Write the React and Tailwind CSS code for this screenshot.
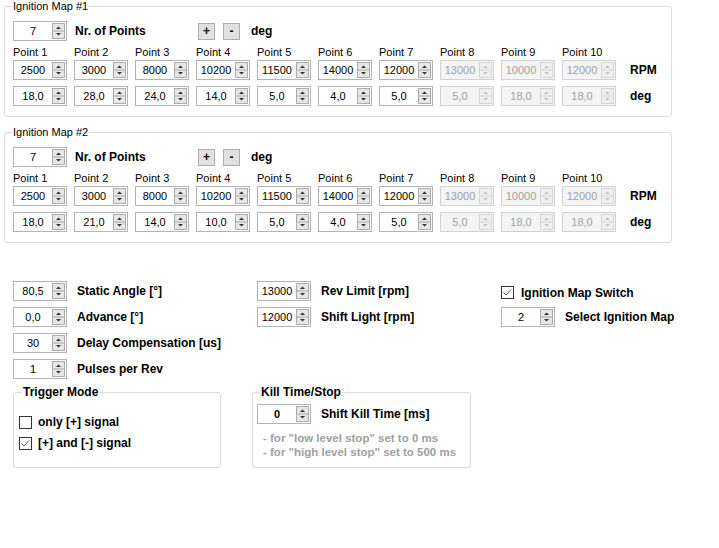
import React from "react"

const rpm1 = ["2500", "3000", "8000", "10200", "11500", "14000", "12000", "13000", "10000", "12000"]
const deg1 = ["18,0", "28,0", "24,0", "14,0", "5,0", "4,0", "5,0", "5,0", "18,0", "18,0"]
const deg2 = ["18,0", "21,0", "14,0", "10,0", "5,0", "4,0", "5,0", "5,0", "18,0", "18,0"]

function Arrows({ disabled }) {
  const fill = disabled ? "#c4c4c4" : "#333333"
  return (
    <svg width="13" height="16" viewBox="0 0 13 16" className="mr-[1px] shrink-0">
      <rect x="0.5" y="0.5" width="12" height="15" fill={disabled ? "#f0f0f0" : "#e6e6e6"} stroke={disabled ? "#d6d6d6" : "#acacac"} />
      <line x1="0" y1="8" x2="13" y2="8" stroke={disabled ? "#d6d6d6" : "#acacac"} />
      <path d="M4 6h5L6.5 3.5z" fill={fill} />
      <path d="M4 10h5L6.5 12.5z" fill={fill} />
    </svg>
  )
}

function Spin({ value, disabled, bold }) {
  return (
    <div
      className={`flex h-[20px] w-[54px] shrink-0 items-center border ${
        disabled ? "border-[#d2d2d2] bg-[#f4f4f4] text-[#a0a0a0]" : "border-[#b4b4b4] bg-white text-black"
      }`}
    >
      <span className={`flex-1 text-center text-[11px] leading-[18px] ${bold ? "font-bold" : ""}`}>{value}</span>
      <Arrows disabled={disabled} />
    </div>
  )
}

function Check({ checked }) {
  return (
    <svg width="13" height="13" viewBox="0 0 13 13" className="shrink-0">
      <rect x="0.5" y="0.5" width="12" height="12" fill="white" stroke="#333333" />
      {checked && <path d="M2.5 6.5l2.5 2.5 5-5.5" fill="none" stroke="#555555" />}
    </svg>
  )
}

function SmallButton({ children }) {
  return (
    <div className="flex h-[17px] w-[17px] shrink-0 items-center justify-center border border-[#adadad] bg-[#e1e1e1] text-[12px] font-bold leading-none">
      {children}
    </div>
  )
}

function MapGroup({ title, degs }) {
  return (
    <fieldset className="w-[668px] rounded-[3px] border border-[#dcdcdc] px-0 pb-[10px]">
      <legend className="ml-[7px] px-[1px] text-[11px] leading-[13px]">{title}</legend>
      <div className="pl-[8px] pt-[8px]">
        <div className="flex h-[20px] items-center">
          <Spin value="7" />
          <span className="ml-[8px] w-[123px] text-[12px] font-bold">Nr. of Points</span>
          <SmallButton>+</SmallButton>
          <div className="ml-[8px]">
            <SmallButton>-</SmallButton>
          </div>
          <span className="ml-[11px] text-[12px] font-bold">deg</span>
        </div>
        <div className="mt-[5px] flex gap-[7px] text-[11px] leading-[13px]">
          {rpm1.map((_, i) => (
            <span key={i} className="w-[54px]">Point {i + 1}</span>
          ))}
        </div>
        <div className="mt-[1px] flex items-center gap-[7px]">
          {rpm1.map((v, i) => (
            <Spin key={i} value={v} disabled={i > 6} />
          ))}
          <span className="ml-[7px] text-[12px] font-bold">RPM</span>
        </div>
        <div className="mt-[6px] flex items-center gap-[7px]">
          {degs.map((v, i) => (
            <Spin key={i} value={v} disabled={i > 6} />
          ))}
          <span className="ml-[7px] text-[12px] font-bold">deg</span>
        </div>
      </div>
    </fieldset>
  )
}

function SpinRow({ value, label, bold }) {
  return (
    <div className="flex h-[20px] items-center">
      <Spin value={value} bold={bold} />
      <span className="ml-[10px] whitespace-nowrap text-[12px] font-bold">{label}</span>
    </div>
  )
}

export default function App() {
  return (
    <div className="h-[548px] w-[719px] bg-white font-['Liberation_Sans',Arial,sans-serif] text-black">
      <div className="pl-[4px]">
        <MapGroup title="Ignition Map #1" degs={deg1} />
        <div className="mt-[9px]">
          <MapGroup title="Ignition Map #2" degs={deg2} />
        </div>
      </div>

      <div className="mt-[38px] grid grid-cols-[244px_244px_1fr] pl-[13px]">
        <div className="flex flex-col gap-[6px]">
          <SpinRow value="80,5" label="Static Angle [°]" />
          <SpinRow value="0,0" label="Advance [°]" />
          <SpinRow value="30" label="Delay Compensation [us]" />
          <SpinRow value="1" label="Pulses per Rev" />
        </div>
        <div className="flex flex-col gap-[6px]">
          <SpinRow value="13000" label="Rev Limit [rpm]" />
          <SpinRow value="12000" label="Shift Light [rpm]" />
        </div>
        <div className="flex flex-col gap-[6px]">
          <div className="flex h-[20px] items-center pt-[3px]">
            <Check checked />
            <span className="ml-[7px] text-[12px] font-bold">Ignition Map Switch</span>
          </div>
          <SpinRow value="2" label="Select Ignition Map" />
        </div>
      </div>

      <div className="mt-[6px] flex items-start pl-[13px]">
        <fieldset className="w-[208px] rounded-[3px] border border-[#dcdcdc] px-0 pb-[17px]">
          <legend className="ml-[8px] px-[1px] text-[12px] font-bold leading-[14px]">Trigger Mode</legend>
          <div className="flex flex-col gap-[7px] pl-[5px] pt-[16px]">
            <div className="flex h-[14px] items-center">
              <Check />
              <span className="ml-[6px] text-[12px] font-bold">only [+] signal</span>
            </div>
            <div className="flex h-[14px] items-center">
              <Check checked />
              <span className="ml-[6px] text-[12px] font-bold">[+] and [-] signal</span>
            </div>
          </div>
        </fieldset>

        <fieldset className="ml-[31px] w-[219px] rounded-[3px] border border-[#dcdcdc] px-0 pb-[8px]">
          <legend className="ml-[7px] px-[1px] text-[12px] font-bold leading-[14px]">Kill Time/Stop</legend>
          <div className="pl-[4px] pt-[5px]">
            <SpinRow value="0" label="Shift Kill Time [ms]" bold />
          </div>
          <div className="mt-[7px] pl-[10px] text-[11.5px] font-bold leading-[14px] text-[#a0a0a0]">
            <div>- for "low level stop" set to 0 ms</div>
            <div>- for "high level stop" set to 500 ms</div>
          </div>
        </fieldset>
      </div>
    </div>
  )
}
